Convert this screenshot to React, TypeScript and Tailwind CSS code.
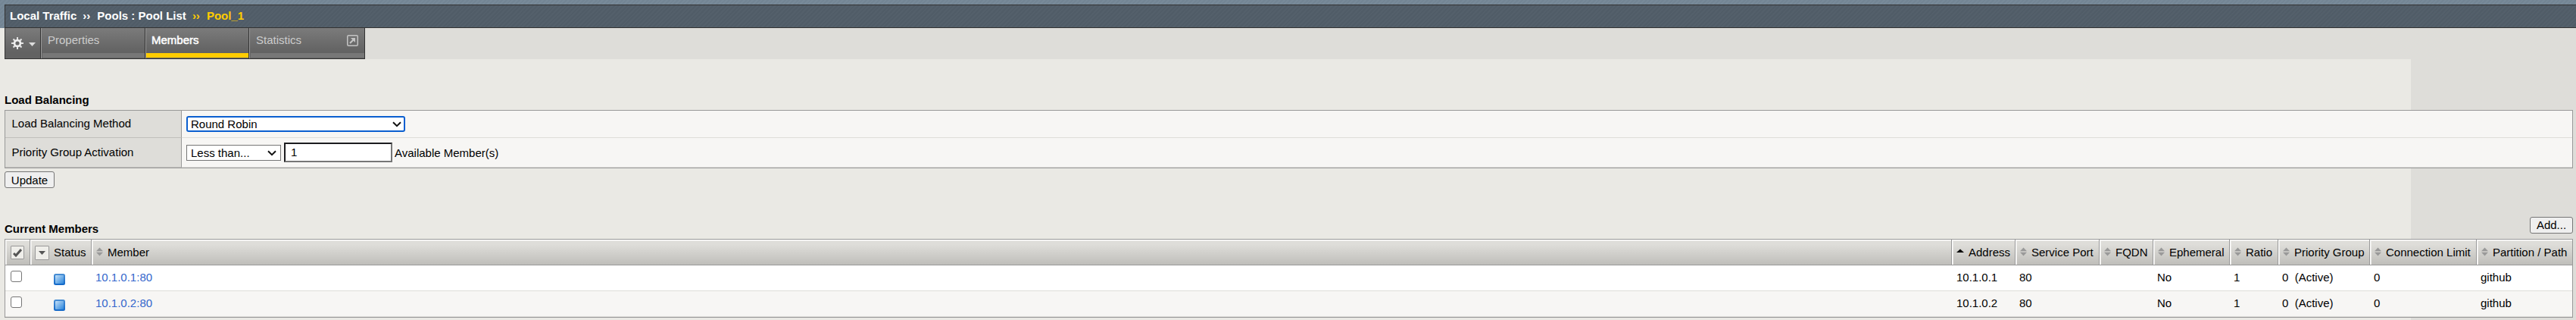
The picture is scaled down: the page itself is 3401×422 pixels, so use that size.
import React from "react";

function Sort({ active = false }: { active?: boolean }) {
  return active ? (
    <svg width="10" height="12" viewBox="0 0 10 12" className="mb-[2px] shrink-0"><path d="M0 7 5 2.500 10 7z" fill="#000" /></svg>
  ) : (
    <svg width="9" height="12" viewBox="0 0 9 12" className="mb-[3px] shrink-0"><path d="M0 5.300 4.500.5 9 5.300zM0 6.700h9L4.500 11.500z" fill="#999" /></svg>
  );
}

function Chevron() {
  return (
    <svg width="12" height="8" viewBox="0 0 12 8" className="shrink-0"><path d="M1 1.200 6 6.200 11 1.200" fill="none" stroke="#111" strokeWidth="2" /></svg>
  );
}

function Pool() {
  return (
    <svg width="15" height="15" viewBox="0 0 15 15">
      <defs>
        <linearGradient id="pool" x1="0" y1="0" x2="1" y2="1"><stop offset="0" stopColor="#c4e0f8" /><stop offset="1" stopColor="#2b86dc" /></linearGradient>
        <linearGradient id="rim" x1="0" y1="0" x2="0" y2="1"><stop offset="0" stopColor="#4a8fd4" /><stop offset="1" stopColor="#1268c8" /></linearGradient>
      </defs>
      <rect width="15" height="15" rx="2.500" fill="url(#rim)" />
      <rect x="2" y="2" width="11" height="11" rx="1" fill="url(#pool)" />
    </svg>
  );
}

const grid = "grid grid-cols-[33px_81px_2456px_84px_111px_71px_101px_64px_121px_141px_127px]";
const headers = ["Address", "Service Port", "FQDN", "Ephemeral", "Ratio", "Priority Group", "Connection Limit", "Partition / Path"];
const headCell = "flex items-center border-r border-[#999] pl-[6px] pt-px shadow-[inset_1px_1px_0_#fff,inset_2px_2px_0_#eeedea]";

function Row({ ip, alt }: { ip: string; alt?: boolean }) {
  return (
    <div className={`${grid} h-[34px] border-b border-[#deddd9] ${alt ? "bg-[#f7f6f4]" : "bg-white"}`}>
      <div className="pl-[7px] pt-[7px]"><div className="size-[15px] rounded-[3px] border border-[#767676] bg-white" /></div>
      <div className="pl-[31px] pt-[11px]"><Pool /></div>
      <div className="pl-[5px] pt-[7px] text-[#36c]">{ip}:80</div>
      <div className="pl-[6px] pt-[7px]">{ip}</div>
      <div className="pl-[5px] pt-[7px]">80</div>
      <div />
      <div className="pl-[5px] pt-[7px]">No</div>
      <div className="pl-[5px] pt-[7px]">1</div>
      <div className="whitespace-pre pl-[5px] pt-[7px]">0&nbsp; (Active)</div>
      <div className="pl-[5px] pt-[7px]">0</div>
      <div className="pl-[5px] pt-[7px]">github</div>
    </div>
  );
}

export default function App() {
  return (
    <div className="flex h-[422px] w-[3401px] flex-col overflow-hidden bg-[linear-gradient(90deg,#eae9e4_3183px,#deddd9_3183px)] font-['Liberation_Sans',Arial,sans-serif] text-[15px] leading-[18px] text-black">
      <header className="h-[37px] bg-[repeating-linear-gradient(135deg,#738594_0_2px,#788a99_2px_4px)] pl-[6px] pt-[6px]">
        <div className="flex h-[31px] items-center whitespace-pre border-y border-l border-[#333] bg-[repeating-linear-gradient(135deg,#505c67_0_2px,#54606b_2px_4px)] pb-px pl-[6px] font-bold text-white">
          <span>Local Traffic</span>
          <span className="ml-[8px]">››</span>
          <span className="ml-[9px]">Pools : Pool List</span>
          <span className="ml-[8px] text-[#fc0]">››</span>
          <span className="ml-[9px] text-[#fc0]">Pool_1</span>
        </div>
      </header>

      <nav className="flex h-[41px] pl-[6px]">
        <div className="flex w-[476px] border-x border-b border-[#333] bg-[linear-gradient(#7b7b7b,#626262_80%)] text-[#ccc]">
          <div className="flex w-[46px] pl-[8px] pt-[12px]">
            <svg width="16" height="16" viewBox="0 0 16 16">
              <g stroke="#e4e4e4" strokeWidth="2"><path d="M8 0v16M0 8h16M2.500 2.500l11 11M13.500 2.500l-11 11" /></g>
              <circle cx="8" cy="8" r="5.300" fill="#eee" /><circle cx="8" cy="8" r="2.600" fill="#666" />
            </svg>
            <svg width="9" height="5" viewBox="0 0 9 5" className="ml-[7px] mt-[7px]"><path d="M0 0h9L4.500 5z" fill="#ddd" /></svg>
          </div>
          <div className="flex w-[138px] flex-col border-l border-[#333] shadow-[inset_1px_0_0_#999]">
            <span className="h-[33px] pl-[9px] pt-[7px]">Properties</span><span className="ml-[2px] h-[6px] bg-[#777]" />
          </div>
          <div className="flex w-[137px] flex-col border-l border-[#333] shadow-[inset_1px_0_0_#999]">
            <span className="h-[33px] pl-[8px] pt-[7px] text-white [-webkit-text-stroke:0.500px_#fff]">Members</span><span className="ml-px h-[6px] bg-[#fc0]" />
          </div>
          <div className="flex flex-1 flex-col border-l border-[#333] shadow-[inset_1px_0_0_#999]">
            <div className="flex h-[33px] justify-between pl-[9px] pr-[8px] pt-[7px]"><span>Statistics</span>
              <svg width="15" height="15" viewBox="0 0 15 15" className="mt-[2px]" fill="none" stroke="#c4c4c4"><rect x=".75" y=".75" width="13.500" height="13.500" rx="1.500" strokeWidth="1.500" /><path d="M4 11 8.500 6.500" strokeWidth="2.200" /><path d="M5 4h6v6z" fill="#c4c4c4" stroke="none" /></svg>
            </div><span className="ml-[2px] h-[6px] bg-[#777]" />
          </div>
        </div>
        <div className="flex-1 bg-[#deddd9]" />
      </nav>

      <main className="flex flex-col pl-[6px] pr-[4px]">
        <h2 className="mt-[45px] h-[22px] font-bold">Load Balancing</h2>
        <section className="grid h-[77px] grid-cols-[233px_1fr] grid-rows-[36px_39px] border border-[#999] bg-[#f7f6f4]">
          <div className="border-b border-r border-b-[#c0bfbb] border-r-[#999] bg-[#deddd9] pl-[8.500px] pt-[8px]">Load Balancing Method</div>
          <div className="border-b border-[#deddd9] pl-[6px] pt-[7px]">
            <div className="flex h-[21px] w-[289px] items-center justify-between rounded-[3px] border-2 border-[#0a5fd0] bg-white pl-[4px] pr-[3px]"><span className="pt-px">Round Robin</span><Chevron /></div>
          </div>
          <div className="border-b border-r border-b-[#c0bfbb] border-r-[#999] bg-[#deddd9] pl-[8.500px] pt-[10px]">Priority Group Activation</div>
          <div className="flex border-b border-[#deddd9] pl-[6px] pt-[6px]">
            <div className="mt-[3px] flex h-[21px] w-[125px] items-center justify-between border border-[#767676] bg-white pl-[5px] pr-[5px]"><span className="pt-px">Less than...</span><Chevron /></div>
            <div className="ml-[4px] flex h-[26px] w-[143px] items-center border-2 border-[#767676] border-l-[#1c1c1f] border-t-[#1c1c1f] bg-white pl-[7px]">1</div>
            <span className="ml-[3px] mt-[5px]">Available Member(s)</span>
          </div>
        </section>
        <button className="mt-[4px] flex h-[22px] w-[66px] items-center justify-center rounded-[3px] border border-[#767676] bg-[#efefef] pt-[2px]">Update</button>

        <div className="mt-[38px] flex h-[29px] justify-between">
          <h2 className="pt-[7px] font-bold">Current Members</h2>
          <button className="flex h-[22px] w-[57px] items-center justify-center rounded-[3px] border border-[#767676] bg-[#efefef]">Add...</button>
        </div>
        <section className="border border-r-0 border-[#999]">
          <div className={`${grid} h-[34px] border-b border-[#999] bg-[linear-gradient(#deddd9_20%,#bfbeba)]`}>
            <div className={headCell}>
              <span className="ml-px flex size-[18px] items-center justify-center rounded-[1px] border border-[#999] bg-[#efeeea]"><svg width="12" height="11" viewBox="0 0 12 11"><path d="m1 6 3 3L11 1" fill="none" stroke="#555" strokeWidth="3" /></svg></span>
            </div>
            <div className={headCell}>
              <span className="flex size-[19px] items-center justify-center rounded-[1px] border border-[#999] bg-[#efeeea]"><svg width="9" height="5" viewBox="0 0 9 5"><path d="M0 0h9L4.500 5z" fill="#555" /></svg></span><span className="ml-[6px]">Status</span>
            </div>
            <div className={headCell}><Sort /><span className="ml-[6px]">Member</span></div>
            {headers.map((h, i) => (
              <div key={h} className={`${headCell} whitespace-nowrap`}><Sort active={i === 0} /><span className="ml-[6px]">{h}</span></div>
            ))}
          </div>
          <div className="border-r border-[#999]"><Row ip="10.1.0.1" /><Row ip="10.1.0.2" alt /></div>
        </section>
      </main>
    </div>
  );
}
